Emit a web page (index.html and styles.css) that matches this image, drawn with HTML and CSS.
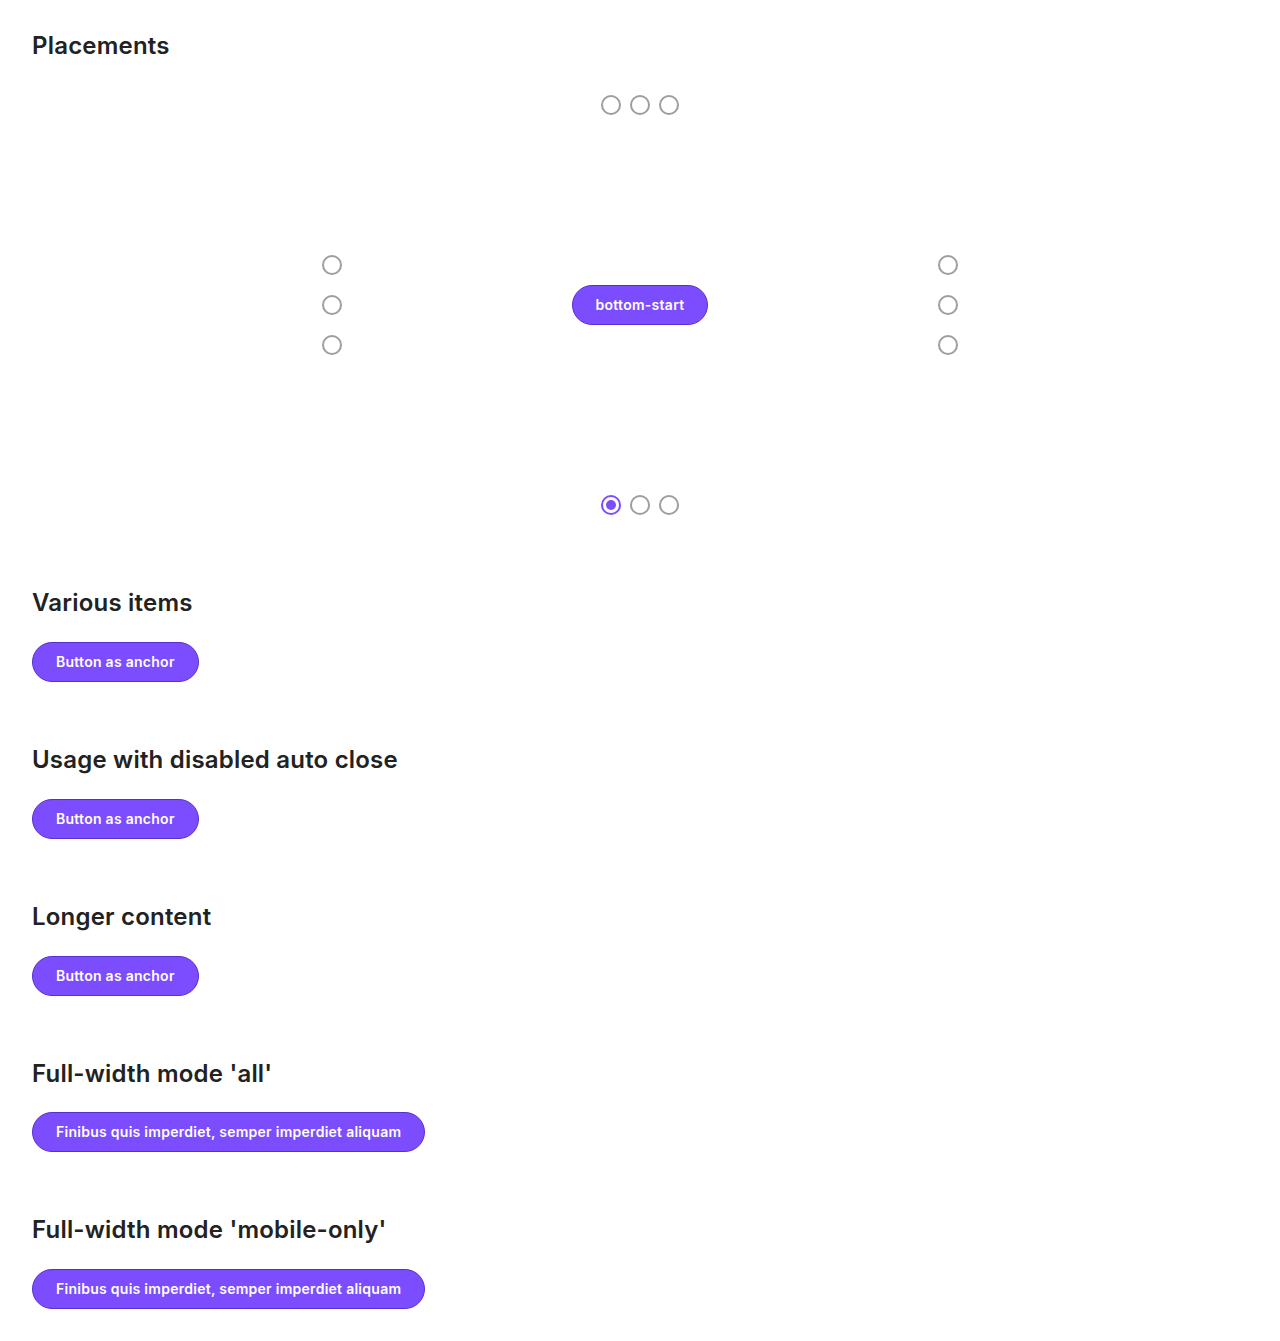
FILE: index.html
```html
<!DOCTYPE html>
<html lang="en">
<head>
<meta charset="utf-8">
<title>Dropdown</title>
<link rel="stylesheet" href="styles.css">
</head>
<body>
<main class="page">
  <section class="section section-placements">
    <h2 class="title">Placements</h2>
    <div class="placements">
      <div class="radios radios-row cell-top">
        <span class="radio"></span><span class="radio"></span><span class="radio"></span>
      </div>
      <div class="radios radios-col cell-left">
        <span class="radio"></span><span class="radio"></span><span class="radio"></span>
      </div>
      <div class="cell-center">
        <button class="btn">bottom-start</button>
      </div>
      <div class="radios radios-col cell-right">
        <span class="radio"></span><span class="radio"></span><span class="radio"></span>
      </div>
      <div class="radios radios-row cell-bottom">
        <span class="radio radio-checked"></span><span class="radio"></span><span class="radio"></span>
      </div>
    </div>
  </section>
  <section class="section">
    <h2 class="title">Various items</h2>
    <button class="btn">Button as anchor</button>
  </section>
  <section class="section">
    <h2 class="title">Usage with disabled auto close</h2>
    <button class="btn">Button as anchor</button>
  </section>
  <section class="section">
    <h2 class="title">Longer content</h2>
    <button class="btn">Button as anchor</button>
  </section>
  <section class="section">
    <h2 class="title">Full-width mode 'all'</h2>
    <button class="btn">Finibus quis imperdiet, semper imperdiet aliquam</button>
  </section>
  <section class="section">
    <h2 class="title">Full-width mode 'mobile-only'</h2>
    <button class="btn">Finibus quis imperdiet, semper imperdiet aliquam</button>
  </section>
</main>
</body>
</html>
```

FILE: styles.css
```css
* { box-sizing: border-box; }
html, body { margin: 0; padding: 0; background: #fff; }
body {
  font-family: Inter, "Noto Sans", "Liberation Sans", sans-serif;
  color: #222;
}
.page {
  padding: 32px;
  display: flex;
  flex-direction: column;
  gap: 64px;
}
.section {
  display: flex;
  flex-direction: column;
  align-items: flex-start;
  gap: 24px;
}
.section-placements {
  gap: 34.2px;
  align-items: stretch;
  margin-bottom: 10.2px;
}
.title {
  margin: 0;
  font-size: 24px;
  line-height: 1.2;
  font-weight: 600;
  color: #222;
  letter-spacing: 0.2px;
}
.placements {
  display: grid;
  grid-template-columns: 1fr 20px 596px 20px 1fr;
  grid-template-rows: 20px 100px 20px;
  row-gap: 140px;
}
.cell-top { grid-column: 3; grid-row: 1; justify-self: center; }
.cell-left { grid-column: 2; grid-row: 2; }
.cell-center { grid-column: 3; grid-row: 2; display: flex; align-items: center; justify-content: center; }
.cell-right { grid-column: 4; grid-row: 2; }
.cell-bottom { grid-column: 3; grid-row: 3; justify-self: center; }
.radios { display: flex; }
.radios-row { flex-direction: row; gap: 9px; }
.radios-col { flex-direction: column; gap: 20px; }
.radio {
  display: block;
  width: 20px;
  height: 20px;
  border-radius: 50%;
  border: 2px solid #9e9e9e;
  background: #fff;
  position: relative;
}
.radio-checked { border-color: #7c4dff; }
.radio-checked::after {
  content: "";
  position: absolute;
  left: 3px;
  top: 3px;
  width: 10px;
  height: 10px;
  border-radius: 50%;
  background: #7c4dff;
}
.btn {
  height: 40px;
  padding: 0 23px;
  border: 1px solid #5a2fd0;
  border-radius: 20px;
  background: #7c4dff;
  color: #fff;
  font-family: Inter, "Noto Sans", "Liberation Sans", sans-serif;
  font-size: 14px;
  font-weight: 600;
  line-height: 38px;
  letter-spacing: 0.27px;
  white-space: nowrap;
  cursor: pointer;
}
```
